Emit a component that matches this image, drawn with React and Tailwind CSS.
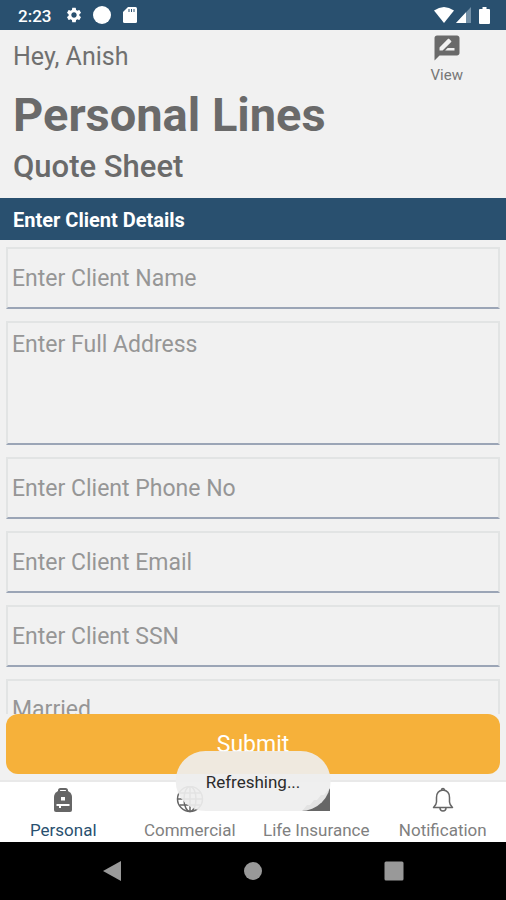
import React from 'react';
import { MdSettings, MdRateReview } from 'react-icons/md';

const fields = [
  { id: 'name', label: 'Enter Client Name', type: 'text' },
  { id: 'address', label: 'Enter Full Address', type: 'area' },
  { id: 'phone', label: 'Enter Client Phone No', type: 'tel' },
  { id: 'email', label: 'Enter Client Email', type: 'email' },
  { id: 'ssn', label: 'Enter Client SSN', type: 'text' },
];

const fieldStyle =
  'block w-full shrink-0 rounded-none border-2 border-[#e2e4e4] border-b-[#9ba5b6] bg-[#f1f1f1] px-1 text-[23px] leading-7 text-[#969696] placeholder:text-[#969696] placeholder:opacity-100 focus:outline-none';

const BackpackIcon = () => (
  <svg width="20" height="26" viewBox="0 0 20 26" fill="none">
    <path d="M6 5V3.500Q6 2 7.500 2h5Q14 2 14 3.500V5" stroke="#666" strokeWidth="2" />
    <path d="M5 4h10q4 2 4 6v13q0 2-2 2H3q-2 0-2-2V10Q1 6 5 4z" fill="#666" />
    <path d="M8 10h4v3.500H8zM3.500 17h13v2H8v2H6v-2H3.500z" fill="#fff" />
  </svg>
);

const GlobeIcon = () => (
  <svg width="28" height="28" viewBox="0 0 28 28" fill="none" stroke="#666" strokeWidth="1.500">
    <circle cx="14" cy="13" r="12.500" />
    <ellipse cx="14" cy="13" rx="6" ry="12.500" />
    <path d="M14 .5v25M1.500 13h25M3.500 7h21M3.500 19h21" />
  </svg>
);

const StepsIcon = () => (
  <svg width="28" height="24" viewBox="0 0 28 24" fill="#666">
    <path d="M0 23l5-6h3l4-5h3l4-5h3l6-7v23z" />
  </svg>
);

const BellIcon = () => (
  <svg width="22" height="26" viewBox="0 0 22 26" fill="none" stroke="#666" strokeWidth="1.500" strokeLinejoin="round">
    <path d="M11 3C6.500 3.500 4.500 7 4.500 10.500V15c0 2-1 3.500-3 5.500h19c-2-2-3-3.500-3-5.500v-4.500C17.500 7 15.500 3.500 11 3z" />
    <path d="M9.500 3a1.500 1.500 0 0 1 3 0M8 21c.2 4 5.800 4 6 0" />
  </svg>
);

const tabs = [
  { name: 'Personal', Icon: BackpackIcon, active: true },
  { name: 'Commercial', Icon: GlobeIcon },
  { name: 'Life Insurance', Icon: StepsIcon },
  { name: 'Notification', Icon: BellIcon },
];

const StatusBar = () => (
  <div className="flex h-[30px] shrink-0 items-center justify-between bg-[#29506f] pr-4 pl-[18px] text-white">
    <div className="flex items-center">
      <span className="pt-0.5 text-[17px] leading-6 font-medium">2:23</span>
      <MdSettings size={18} className="ml-[14px]" />
      <svg width="18" height="18" viewBox="0 0 18 18" className="ml-[10px]">
        <circle cx="9" cy="9" r="9" fill="#fff" />
      </svg>
      <svg width="14" height="16" viewBox="0 0 14 16" className="ml-3">
        <path d="M5 0h7.500Q14 0 14 1.500v13q0 1.500-1.500 1.500h-11Q0 16 0 14.500V5z" fill="#fff" />
        <path d="M6 2v3M8.500 2v3M11 2v3" stroke="#29506f" />
      </svg>
    </div>
    <div className="flex items-center">
      <svg width="20" height="16" viewBox="0 0 20 16">
        <path d="M0 3.500Q10-3.500 20 3.500L10 16z" fill="#fff" />
      </svg>
      <svg width="15" height="16" viewBox="0 0 15 16" className="ml-[2px]">
        <path d="M15 0v16H0z" fill="#7390a7" />
        <path d="M10 5.300V16H0z" fill="#fff" />
      </svg>
      <svg width="11" height="17" viewBox="0 0 11 17" className="ml-2">
        <path d="M3.500 0h4v2H10q1 0 1 1v13q0 1-1 1H1q-1 0-1-1V3q0-1 1-1h2.500z" fill="#fff" />
      </svg>
    </div>
  </div>
);

const App = () => {
  return (
    <div className="relative flex h-dvh flex-col overflow-hidden bg-[#f1f1f1] font-[Roboto,sans-serif]">
      <StatusBar />

      {/* Header */}
      <header className="flex h-[168px] shrink-0 items-start justify-between pr-[43px] pl-[13px] text-[#6a6a6a]">
        <div>
          <p className="pt-[13px] text-[25px] leading-7 text-[#707070]">Hey, Anish</p>
          <h1 className="pt-4 text-[47px] leading-14 font-bold">Personal Lines</h1>
          <h2 className="pt-1 text-[31px] leading-10 font-medium">Quote Sheet</h2>
        </div>
        <button type="button" className="flex flex-col items-center pt-[3px]">
          <MdRateReview size={30} />
          <span className="pt-0.5 text-[15px] leading-5 text-[#777]">View</span>
        </button>
      </header>

      <h3 className="flex h-[42px] shrink-0 items-center bg-[#29506f] px-[13px] pt-0.5 text-xl font-bold text-white">
        Enter Client Details
      </h3>

      {/* Form */}
      <form className="flex min-h-0 flex-1 flex-col" onSubmit={(e) => e.preventDefault()}>
        <div className="flex min-h-0 flex-1 flex-col gap-3 overflow-y-auto px-[6px] pt-[7px] [scrollbar-width:none]">
          {fields.map((field) =>
            field.type === 'area' ? (
              <textarea
                key={field.id}
                id={field.id}
                aria-label={field.label}
                placeholder={field.label}
                className={`${fieldStyle} h-[124px] resize-none pt-2`}
              />
            ) : (
              <input
                key={field.id}
                id={field.id}
                type={field.type}
                aria-label={field.label}
                placeholder={field.label}
                className={`${fieldStyle} h-[62px]`}
              />
            )
          )}
          <select aria-label="Marital status" className={`${fieldStyle} h-[62px] appearance-none`}>
            <option>Married</option>
            <option>Single</option>
          </select>
        </div>
        <div className="shrink-0 px-[6px] pb-[6px]">
          <button type="submit" className="h-[60px] w-full rounded-xl bg-[#f6b13a] pt-0.5 text-[23px] text-white">
            Submit
          </button>
        </div>
      </form>

      {/* Bottom tabs */}
      <nav className="grid h-[62px] shrink-0 grid-cols-4 border-t-2 border-[#e9e9e9] bg-white">
        {tabs.map(({ name, Icon, active }) => (
          <a
            key={name}
            href={`#${name}`}
            className={`flex flex-col items-center text-[17px] whitespace-nowrap ${active ? 'text-[#29506f]' : 'text-[#808080]'}`}
          >
            <span className="flex h-9 items-center">
              <Icon />
            </span>
            <span className="leading-6">{name}</span>
          </a>
        ))}
      </nav>

      {/* Android navigation */}
      <div className="flex h-[58px] shrink-0 items-center justify-center bg-black">
        <div className="grid w-5/6 grid-cols-3 justify-items-center">
          <button type="button" aria-label="Back">
            <svg width="20" height="22" viewBox="0 0 20 22">
              <path d="M19 1v20L1 11z" fill="#999" />
            </svg>
          </button>
          <button type="button" aria-label="Home">
            <svg width="20" height="22" viewBox="0 0 20 22">
              <circle cx="10" cy="11" r="9" fill="#999" />
            </svg>
          </button>
          <button type="button" aria-label="Recent apps">
            <svg width="20" height="22" viewBox="0 0 20 22">
              <rect x="0.500" y="1.500" width="19" height="19" rx="1.500" fill="#999" />
            </svg>
          </button>
        </div>
      </div>

      {/* Toast */}
      <div
        role="status"
        className="absolute bottom-[89px] left-1/2 flex h-[60px] -translate-x-1/2 items-center rounded-[30px] bg-[#eeeeee]/92 px-[30px] pt-[3px] text-[17px] text-[#2b2b2b]"
      >
        Refreshing...
      </div>
    </div>
  );
};

export default App;
